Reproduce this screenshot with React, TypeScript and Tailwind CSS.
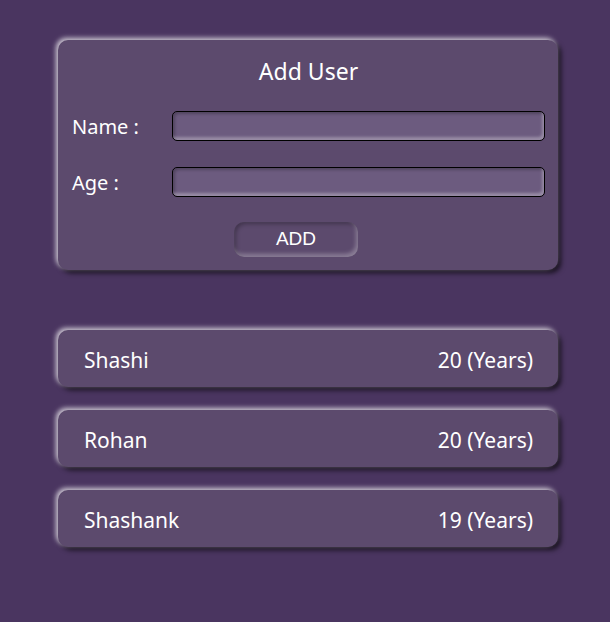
import React from "react";

const users = [
  { name: "Shashi", age: 20 },
  { name: "Rohan", age: 20 },
  { name: "Shashank", age: 19 },
];

const glow =
  "shadow-[-2px_-2px_5px_rgba(255,255,255,0.75),3px_3px_5px_rgba(0,0,0,0.7)]";

const inputCls =
  "h-[30px] min-w-0 flex-1 rounded-[5px] border border-black bg-[#6c5b7f] shadow-[inset_-2px_-3px_3px_rgba(255,255,255,0.3),inset_2px_2px_3px_rgba(0,0,0,0.25)] outline-none";

export default function App() {
  return (
    <div
      className="min-h-[622px] w-full bg-[#4a3560] pt-[40px] pl-[58px]"
      style={{ fontFamily: '"Segoe UI", "Noto Sans", sans-serif' }}
    >
      <div className="flex w-[500px] flex-col gap-[60px]">
        <div className={`flex h-[230px] flex-col rounded-[10px] bg-[#5c4a6d] pl-[14px] pr-[13px] text-white ${glow}`}>
          <h2 className="mt-[15px] text-center text-[23px] leading-[32px]">Add User</h2>
          <div className="mt-[24px] flex items-center">
            <label className="w-[100px] shrink-0 pt-[2px] text-[20px] leading-[28px]">Name :</label>
            <input className={inputCls} />
          </div>
          <div className="mt-[26px] flex items-center">
            <label className="w-[100px] shrink-0 pt-[2px] text-[20px] leading-[28px]">Age :</label>
            <input className={inputCls} />
          </div>
          <div className="mt-[25px] flex justify-center">
            <button
              className="ml-[-25px] h-[35px] w-[124px] rounded-[10px] bg-[#5c4a6d] text-[19px] text-white shadow-[inset_-2px_-3px_4px_rgba(255,255,255,0.3),inset_2px_2px_4px_rgba(0,0,0,0.3)]"
              style={{ fontFamily: '"Liberation Sans", Arial, sans-serif' }}
            >
              ADD
            </button>
          </div>
        </div>
        <div className="flex flex-col gap-[23px]">
          {users.map((u) => (
            <div
              key={u.name}
              className={`flex h-[57px] items-center justify-between rounded-[10px] bg-[#5c4a6d] pl-[26px] pr-[25px] pt-[5px] text-[21px] text-white ${glow}`}
            >
              <span>{u.name}</span>
              <span>{u.age} (Years)</span>
            </div>
          ))}
        </div>
      </div>
    </div>
  );
}
